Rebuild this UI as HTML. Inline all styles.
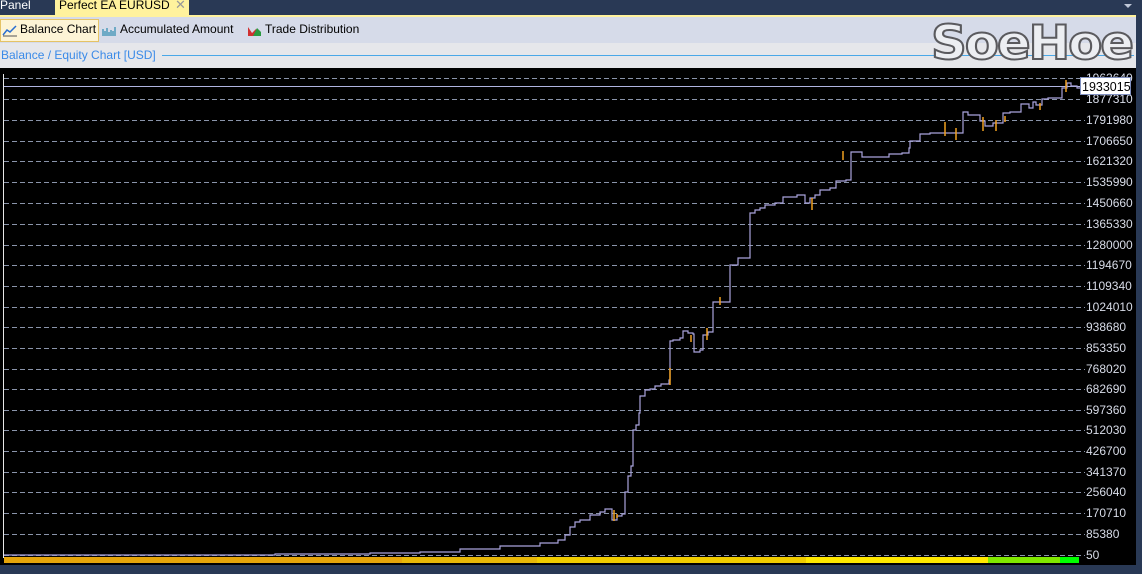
<!DOCTYPE html>
<html><head><meta charset="utf-8"><style>
body{margin:0;width:1142px;height:574px;overflow:hidden;background:#293955;font-family:"Liberation Sans",sans-serif;position:relative}
.a{position:absolute}
</style></head><body>
<div class="a" style="left:0;top:0;width:1142px;height:15px;background:#293955"></div>
<div class="a" style="left:0;top:-2px;color:#fff;font-size:12px">Panel</div>
<div class="a" style="left:55px;top:0;width:134px;height:16px;background:#fff29d"></div>
<div class="a" style="left:59px;top:-2px;color:#000;font-size:12px">Perfect EA EURUSD</div>
<div class="a" style="left:175px;top:-3px;color:#999;font-size:13px">✕</div>
<div class="a" style="left:1124px;top:4px;width:0;height:0;border-left:4px solid transparent;border-right:4px solid transparent;border-top:4px solid #c0c8d8"></div>
<div class="a" style="left:0;top:15px;width:1136px;height:2px;background:#fff29d"></div>
<div class="a" style="left:0;top:17px;width:1136px;height:26px;background:#d6dbe9"></div>
<div class="a" style="left:0;top:43px;width:1136px;height:25px;background:#e6e7eb"></div>
<div class="a" style="left:0;top:19px;width:97px;height:21px;background:#fdf4d6;border:1px solid #e5c365"></div>
<svg class="a" style="left:2px;top:23px" width="16" height="14"><path d="M1 12L5 7L8 9L14 3" stroke="#2a6ed0" fill="none" stroke-width="1.5"/><path d="M1 13H15" stroke="#555"/></svg>
<div class="a" style="left:20px;top:22px;font-size:12px;color:#000">Balance Chart</div>
<svg class="a" style="left:102px;top:23px" width="16" height="14"><path d="M1 13V6M3 13V8M5 13V5M7 13V9M9 13V7M11 13V8M13 13V4" stroke="#2a8ab0" stroke-width="1.2"/></svg>
<div class="a" style="left:120px;top:22px;font-size:12px;color:#000">Accumulated Amount</div>
<svg class="a" style="left:247px;top:23px" width="16" height="14"><path d="M1 13V4L5 10L9 6L13 11V13Z" fill="#d03030"/><path d="M6 13L10 5L14 9V13Z" fill="#2a9a40"/></svg>
<div class="a" style="left:265px;top:22px;font-size:12px;color:#000">Trade Distribution</div>
<div class="a" style="left:1px;top:48px;font-size:12px;color:#3a8ae8">Balance / Equity Chart [USD]</div>
<div class="a" style="left:162px;top:55px;width:972px;height:1px;background:#4aa8e8"></div>
<div class="a" style="left:931px;top:19px;font-size:47px;font-weight:bold;color:#eceef2;-webkit-text-stroke:2px #5a5a5e;letter-spacing:-2px;font-family:'DejaVu Sans',sans-serif;line-height:50px;white-space:nowrap;transform:scaleX(1.06);transform-origin:left">SoeHoe</div>
<div class="a" style="left:0;top:68px;width:1136px;height:497px;background:#000"></div>
<svg class="a" style="left:0;top:0" width="1142" height="574">
<g stroke="#8a94aa" stroke-dasharray="5 3" stroke-width="1">
<path d="M4 78.5H1085M4 99.5H1080M4 120.5H1085M4 141.5H1085M4 161.5H1085M4 182.5H1085M4 203.5H1085M4 224.5H1085M4 245.5H1085M4 265.5H1085M4 286.5H1085M4 307.5H1085M4 327.5H1085M4 348.5H1085M4 369.5H1085M4 389.5H1085M4 410.5H1085M4 430.5H1085M4 451.5H1085M4 472.5H1085M4 492.5H1085M4 513.5H1085M4 534.5H1085M4 555.5H1085"/>
</g>
<path d="M3.5 74V558" stroke="#e8e8e8"/>
<path d="M4 86.5H1080" stroke="#b0b4e0"/>
<path d="M4 555H275V554H370V553H420V552H460V549H500V546H540V543H558V540H565V535H570V527H575V522H580V520H590V515H600V512H605V509H612V520H617V516H622V514H625V492H628V476H631V466H633V430H636V425H639V413H640V396H645V390H650V389H655V386H661V384H669V380H670V341H673V340H680V338H683V331H688V333H693V334H694V352H700V350H703V335H708V332H713V302H730V265H738V258H750V213H755V210H760V208H765V205H775V203H783V197H797V195H800V195H805V203H810V198H815V195H820V190H830V188H836V181H846V180H851V177H851V152H862V157H889V154H902V153H909V148H910V141H920V134H930V133H963V112H968V115H980V121H985V126H993V123H1003V113H1010V112H1021V104H1029V108H1033V102H1036V105H1042V99H1048V98H1062V88H1067V83H1071V86H1077V88H1080" stroke="#a9a4dc" fill="none" stroke-width="1.2"/>
<g stroke="#f0a020" stroke-width="1.5">
<path d="M614 510V521M617 514V518M670 368V385M691 335V342M707 328V340M720 297V305M812 198V210M843 151V160M945 122V136M956 128V140M983 117V131M996 120V131M1005 116V122M1040 103V110M1066 80V92"/>
</g>
<rect x="4" y="557" width="398" height="6" fill="#e6a50a"/>
<rect x="402" y="557" width="135" height="6" fill="#e8b808"/>
<rect x="537" y="557" width="269" height="6" fill="#f0cc00"/>
<rect x="806" y="557" width="182" height="6" fill="#ffe800"/>
<rect x="988" y="557" width="72" height="6" fill="#80e800"/>
<rect x="1060" y="557" width="19" height="6" fill="#00ff00"/>
<g fill="#d8dce8" font-size="12" font-family="Liberation Sans">
<text x="1086" y="82">1962640</text>
<text x="1086" y="103">1877310</text>
<text x="1086" y="124">1791980</text>
<text x="1086" y="145">1706650</text>
<text x="1086" y="165">1621320</text>
<text x="1086" y="186">1535990</text>
<text x="1086" y="207">1450660</text>
<text x="1086" y="228">1365330</text>
<text x="1086" y="249">1280000</text>
<text x="1086" y="269">1194670</text>
<text x="1086" y="290">1109340</text>
<text x="1086" y="311">1024010</text>
<text x="1086" y="331">938680</text>
<text x="1086" y="352">853350</text>
<text x="1086" y="373">768020</text>
<text x="1086" y="393">682690</text>
<text x="1086" y="414">597360</text>
<text x="1086" y="434">512030</text>
<text x="1086" y="455">426700</text>
<text x="1086" y="476">341370</text>
<text x="1086" y="496">256040</text>
<text x="1086" y="517">170710</text>
<text x="1086" y="538">85380</text>
<text x="1086" y="559">50</text>
</g>
<rect x="1080.5" y="77.5" width="50" height="17" fill="#fff" stroke="#8090c0"/>
<text x="1082" y="91" font-size="12.5" fill="#000" font-family="Liberation Sans">1933015</text>
</svg>
</body></html>
